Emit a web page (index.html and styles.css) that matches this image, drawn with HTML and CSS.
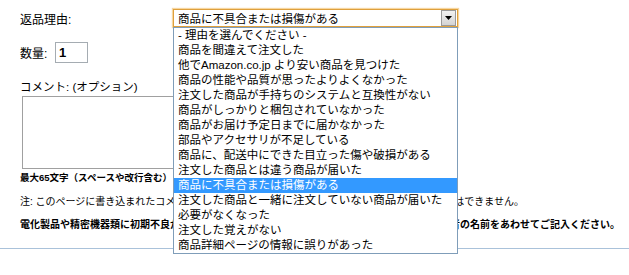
FILE: index.html
```html
<!DOCTYPE html>
<html lang="ja">

<head>
    <meta charset="UTF-8">
    <meta name="viewport" content="width=device-width, initial-scale=1.0">
    <title>返品理由</title>
    <link rel="stylesheet" href="styles.css">
</head>

<body>
    <div class="return-form">
        <div class="row reason">
            <label class="lbl">返品理由:</label>
            <div class="picker">
                <div class="select">
                    <span class="current">商品に不具合または損傷がある</span>
                    <span class="drop-btn">
                        <svg width="7" height="4" viewBox="0 0 7 4"><path d="M0 0h7L3.5 4z" fill="#000"/></svg>
                    </span>
                </div>
                <ul class="options">
                    <li>- 理由を選んでください -</li>
                    <li>商品を間違えて注文した</li>
                    <li>他でAmazon.co.jp より安い商品を見つけた</li>
                    <li>商品の性能や品質が思ったよりよくなかった</li>
                    <li>注文した商品が手持ちのシステムと互換性がない</li>
                    <li>商品がしっかりと梱包されていなかった</li>
                    <li>商品がお届け予定日までに届かなかった</li>
                    <li>部品やアクセサリが不足している</li>
                    <li>商品に、配送中にできた目立った傷や破損がある</li>
                    <li>注文した商品とは違う商品が届いた</li>
                    <li class="selected">商品に不具合または損傷がある</li>
                    <li>注文した商品と一緒に注文していない商品が届いた</li>
                    <li>必要がなくなった</li>
                    <li>注文した覚えがない</li>
                    <li>商品詳細ページの情報に誤りがあった</li>
                </ul>
            </div>
        </div>
        <div class="row qty">
            <label class="lbl-short">数量:</label>
            <input type="text" class="txt-qty" value="1">
        </div>
        <div class="comment">
            <label class="lbl-comment">コメント: (オプション)</label>
            <textarea class="txt-comment"></textarea>
            <p class="limit">最大65文字（スペースや改行含む）</p>
        </div>
        <p class="note">注: このページに書き込まれたコメントは出品者に送られます。送信後にコメントを変更することはできません。</p>
        <p class="note strong">電化製品や精密機器類に初期不良があった場合は、メーカーのサポートセンターへ連絡し、担当者の名前をあわせてご記入ください。</p>
        <div class="divider"></div>
    </div>
</body>

</html>
```

FILE: styles.css
```css
body{
    margin: 0;
    min-height: 275px;
    background: #fff;
    color: #000;
    font-family: "Liberation Sans", "Noto Sans CJK JP", sans-serif;
}
.return-form{
    padding: 9px 0 0 20px;
}
.row{
    display: flex;
    align-items: center;
}
.reason{
    height: 18px;
}
.lbl{
    width: 153px;
    font-size: 12px;
}
.picker{
    position: relative;
    z-index: 2;
}
.select{
    width: 283px;
    height: 16px;
    border: 1px solid #dfa03c;
    box-shadow: 0 0 1px 1px #f6d6a0;
    display: flex;
    align-items: center;
    justify-content: space-between;
    font-size: 11.5px;
}
.current{
    padding-left: 4px;
}
.drop-btn{
    width: 13px;
    height: 14px;
    margin-right: 1px;
    border: 1px solid #9a9a9a;
    background: linear-gradient(#f2f2f2, #d4d4d4);
    display: flex;
    align-items: center;
    justify-content: center;
}
.options{
    position: absolute;
    top: 18px;
    left: 0;
    width: 283px;
    margin: 0;
    padding: 0;
    list-style: none;
    background: #fff;
    border: 1px solid #7f9db9;
    font-size: 11.5px;
}
.options li{
    height: 15px;
    line-height: 15px;
    padding-left: 4px;
    white-space: nowrap;
}
.options .selected{
    background: #3399ff;
    color: #fff;
}
.qty{
    margin-top: 14px;
    height: 23px;
}
.lbl-short{
    width: 35px;
    font-size: 12px;
}
.txt-qty{
    width: 28px;
    height: 19px;
    margin: 0;
    padding: 0 0 0 3px;
    border: 1px solid #a5acb2;
    font-family: "Liberation Sans", sans-serif;
    font-size: 13px;
    font-weight: bold;
}
.comment{
    margin-top: 16px;
}
.lbl-comment{
    display: block;
    height: 14px;
    line-height: 14px;
    font-size: 11.5px;
}
.txt-comment{
    display: block;
    width: 420px;
    height: 73px;
    margin: 2px 0 0 2px;
    padding: 0;
    border: 1px solid #a0a0a0;
    box-sizing: border-box;
    resize: none;
}
.limit{
    margin: 3px 0 0 0;
    height: 12px;
    line-height: 12px;
    font-size: 9.5px;
    font-weight: bold;
}
.note{
    margin: 11px 0 0 0;
    height: 14px;
    line-height: 14px;
    font-size: 10px;
    white-space: nowrap;
}
.strong{
    margin-top: 9px;
    font-weight: bold;
}
.divider{
    height: 0;
    margin: 16px 0 0 -20px;
    border-top: 1px solid #aac2da;
}
```
